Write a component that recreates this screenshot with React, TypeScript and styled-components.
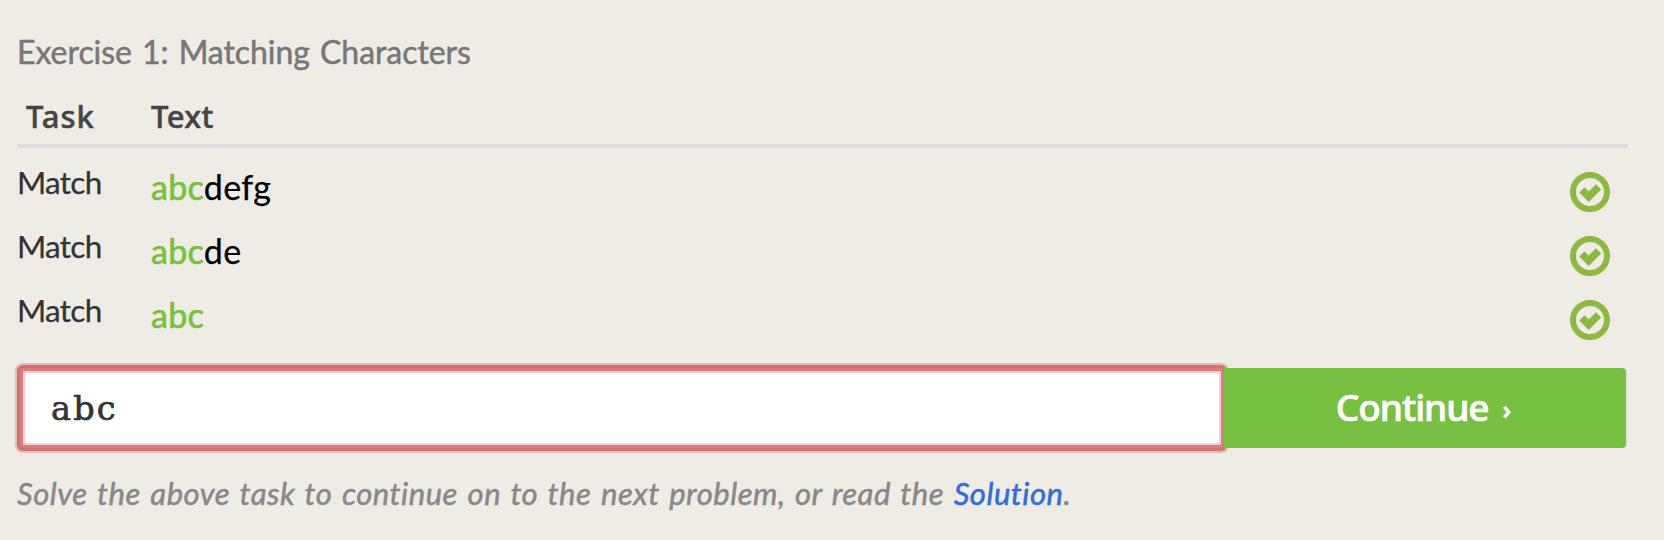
import React from 'react';
import styled, { createGlobalStyle } from 'styled-components';

const GlobalStyle = createGlobalStyle`
  body {
    margin: 0;
    background: #efece5;
    font-family: Lato, 'Noto Sans', sans-serif;
    font-variant-ligatures: none;
    -webkit-text-stroke: 0.5px currentColor;
  }
`;

const Page = styled.main`
  box-sizing: border-box;
  width: 1664px;
  height: 540px;
  padding: 32px 36px 0 18px;
  overflow: hidden;
  background: #efece5;
`;

const Title = styled.h1`
  margin: 0 0 0 -1px;
  font-size: 32px;
  font-weight: 400;
  line-height: 40px;
  letter-spacing: -0.05px;
  word-spacing: 2px;
  color: #777;
`;

const HeadRow = styled.div`
  display: grid;
  grid-template-columns: 133px 1fr;
  height: 48px;
  margin-top: 20px;
  padding-top: 4px;
  border-bottom: 4px solid #dcdddd;
`;

const HeadCell = styled.div<{ $indent?: number; $spacing?: number }>`
  padding-left: ${(p) => p.$indent ?? 0}px;
  font-family: 'Noto Sans', sans-serif;
  font-size: 31px;
  font-weight: 500;
  line-height: 40px;
  letter-spacing: ${(p) => p.$spacing ?? 0}px;
  color: #444;
`;

const TaskRow = styled.div`
  display: grid;
  grid-template-columns: 133px 1fr 58px;
  align-items: start;
  height: 64px;
`;

const TaskName = styled.span`
  margin-left: -1px;
  padding-top: 14px;
  font-size: 31.5px;
  line-height: 40px;
  letter-spacing: -0.7px;
  color: #333;
  -webkit-text-stroke-width: 0.25px;
`;

const Sample = styled.span`
  padding-top: 19px;
  font-size: 34px;
  line-height: 40px;
  letter-spacing: 0.3px;
  color: #000;
  -webkit-text-stroke-width: 0.25px;
`;

const Matched = styled.span`
  color: #78c042;
  -webkit-text-stroke: 0.7px #78c042;
`;

const CheckIcon = styled.svg`
  display: block;
  width: 40px;
  height: 40px;
  margin-top: 24px;
`;

const AnswerRow = styled.div`
  display: flex;
  height: 80px;
  margin: 28px 0 0 2px;
`;

const AnswerInput = styled.input`
  box-sizing: border-box;
  width: 1204px;
  height: 80px;
  padding: 0 0 0 28px;
  border: 3px solid #db7b7b;
  border-radius: 3px;
  outline: 0;
  box-shadow: 0 0 0 3px #cf726e, 0 0 0 5px #e3bdb6, inset 0 0 0 2px #f2cfcf;
  background: #fff;
  font-family: 'DejaVu Serif', 'Liberation Serif', serif;
  font-size: 33.5px;
  letter-spacing: 2.2px;
  color: #333;
  -webkit-text-stroke: 0.7px #333;
`;

const ContinueButton = styled.button`
  position: relative;
  display: flex;
  align-items: center;
  justify-content: center;
  width: 402px;
  height: 80px;
  padding: 0 4px 3px 0;
  border: 0;
  border-radius: 0 4px 4px 0;
  background: #78c042;
  box-shadow: 2px 0 0 #e9e6df;
  font-family: 'Noto Sans', sans-serif;
  font-size: 37px;
  font-weight: 500;
  letter-spacing: -1.05px;
  color: #fff;
  -webkit-text-stroke: 0.7px #fff;
`;

const Chevron = styled.span`
  margin: 4px 0 0 14px;
  font-size: 25px;
  font-weight: 600;
`;

const Hint = styled.p`
  margin: 25px 0 0 -1px;
  font-size: 31px;
  font-style: italic;
  line-height: 40px;
  letter-spacing: 0.52px;
  word-spacing: 1.8px;
  white-space: nowrap;
  color: #888;
`;

const SolutionLink = styled.a`
  color: #2f6bdc;
  text-decoration: none;
`;

const tasks = [
  { matched: 'abc', rest: 'defg' },
  { matched: 'abc', rest: 'de' },
  { matched: 'abc', rest: '' },
];

const Check = () => (
  <CheckIcon viewBox="0 0 40 40" aria-label="Matched">
    <circle cx="20" cy="20" r="17" fill="none" stroke="#8cb93f" strokeWidth="6" />
    <path d="M11.8 17.8 L18.7 24.7 L28.6 14.8" fill="none" stroke="#8cb93f" strokeWidth="7.4" />
  </CheckIcon>
);

export default function App() {
  return (
    <Page>
      <GlobalStyle />
      <Title>Exercise 1: Matching Characters</Title>
      <HeadRow>
        <HeadCell $indent={8} $spacing={0.9}>Task</HeadCell>
        <HeadCell $spacing={0.4}>Text</HeadCell>
      </HeadRow>
      {tasks.map((t, i) => (
        <TaskRow key={i}>
          <TaskName>Match</TaskName>
          <Sample>
            <Matched>{t.matched}</Matched>
            {t.rest}
          </Sample>
          <Check />
        </TaskRow>
      ))}
      <AnswerRow>
        <AnswerInput defaultValue="abc" />
        <ContinueButton>
          Continue <Chevron>›</Chevron>
        </ContinueButton>
      </AnswerRow>
      <Hint>
        Solve the above task to continue on to the next problem, or read the{' '}
        <SolutionLink>Solution</SolutionLink>.
      </Hint>
    </Page>
  );
}
